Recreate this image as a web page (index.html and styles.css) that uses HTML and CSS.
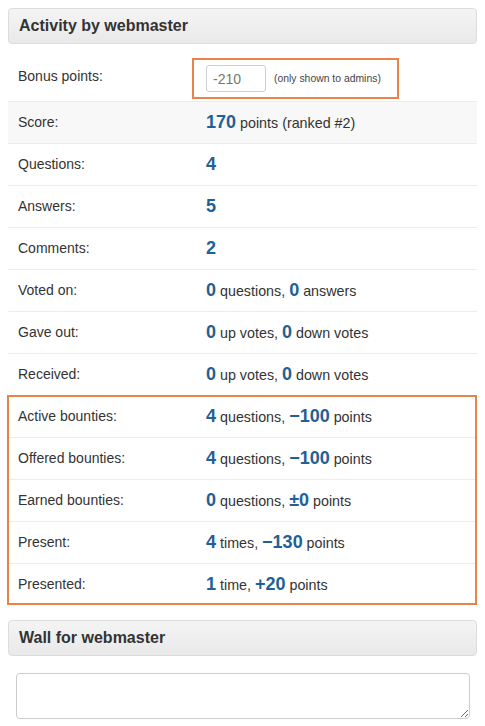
FILE: index.html
```html
<!DOCTYPE html>
<html>
<head>
<meta charset="utf-8">
<link rel="stylesheet" href="styles.css">
</head>
<body>
<div class="page">
  <div class="panel-head"><h2>Activity by webmaster</h2></div>
  <div class="stats">
    <div class="row bonus">
      <div class="label">Bonus points:</div>
      <div class="value">
        <span class="admin-box">
          <input class="bonus-input" type="text" value="-210">
          <span class="note">(only shown to admins)</span>
        </span>
      </div>
    </div>
    <div class="row shaded">
      <div class="label">Score:</div>
      <div class="value"><b>170</b> points (ranked #2)</div>
    </div>
    <div class="row">
      <div class="label">Questions:</div>
      <div class="value"><b>4</b></div>
    </div>
    <div class="row">
      <div class="label">Answers:</div>
      <div class="value"><b>5</b></div>
    </div>
    <div class="row">
      <div class="label">Comments:</div>
      <div class="value"><b>2</b></div>
    </div>
    <div class="row">
      <div class="label">Voted on:</div>
      <div class="value"><b>0</b> questions, <b>0</b> answers</div>
    </div>
    <div class="row">
      <div class="label">Gave out:</div>
      <div class="value"><b>0</b> up votes, <b>0</b> down votes</div>
    </div>
    <div class="row">
      <div class="label">Received:</div>
      <div class="value"><b>0</b> up votes, <b>0</b> down votes</div>
    </div>
    <div class="group">
      <div class="row">
        <div class="label">Active bounties:</div>
        <div class="value"><b>4</b> questions, <b>&minus;100</b> points</div>
      </div>
      <div class="row">
        <div class="label">Offered bounties:</div>
        <div class="value"><b>4</b> questions, <b>&minus;100</b> points</div>
      </div>
      <div class="row">
        <div class="label">Earned bounties:</div>
        <div class="value"><b>0</b> questions, <b>&plusmn;0</b> points</div>
      </div>
      <div class="row">
        <div class="label">Present:</div>
        <div class="value"><b>4</b> times, <b>&minus;130</b> points</div>
      </div>
      <div class="row">
        <div class="label">Presented:</div>
        <div class="value"><b>1</b> time, <b>+20</b> points</div>
      </div>
    </div>
  </div>
  <div class="panel-head wall-head"><h2>Wall for webmaster</h2></div>
  <div class="wall-form">
    <textarea class="wall-text"></textarea>
  </div>
</div>
</body>
</html>
```
FILE: styles.css
```css
html, body {
  margin: 0;
  padding: 0;
  background: #fff;
}
body {
  font-family: "Liberation Sans", Arial, sans-serif;
  font-size: 14px;
  line-height: 20px;
  color: #333;
}
.page {
  padding: 8px;
}
.panel-head {
  height: 36px;
  box-sizing: border-box;
  border: 1px solid #dcdcdc;
  border-radius: 4px;
  background: linear-gradient(to bottom, #f4f4f4, #e9e9e9);
  display: flex;
  align-items: center;
  padding-left: 10px;
}
.panel-head h2 {
  margin: 0;
  font-size: 16px;
  font-weight: bold;
  line-height: 20px;
  color: #333;
}
.stats {
  margin-top: 15px;
}
.row {
  display: grid;
  grid-template-columns: 188px 1fr;
  height: 42px;
  box-sizing: border-box;
  border-top: 1px solid #ececec;
  align-items: start;
}
.row .label,
.row .value {
  padding: 10px 10px 0 10px;
}
.row.bonus {
  border-top: none;
}
.row.bonus .label {
  padding-top: 7px;
}
.row.bonus .value {
  padding-top: 6px;
}
.row.shaded {
  background: #f8f8f8;
}
.value {
  font-size: 14.3px;
}
.value b {
  font-size: 18px;
  font-weight: bold;
  color: #1f6195;
}
.admin-box {
  position: relative;
  display: inline-flex;
  align-items: center;
  gap: 8px;
}
.admin-box::before {
  content: "";
  position: absolute;
  top: -7px;
  bottom: -7px;
  left: -14px;
  right: -18px;
  border: 2px solid #e9834a;
  pointer-events: none;
}
.bonus-input {
  width: 60px;
  height: 27px;
  box-sizing: border-box;
  border: 1px solid #cfcfcf;
  border-radius: 3px;
  padding: 0 6px;
  margin: 0;
  font-family: "Liberation Sans", Arial, sans-serif;
  font-size: 14px;
  color: #777;
  background: #fff;
}
.note {
  font-size: 10.4px;
  line-height: 12px;
  color: #444;
}
.group {
  position: relative;
}
.group::after {
  content: "";
  position: absolute;
  top: 0;
  bottom: 0;
  left: -1px;
  right: 0;
  border: 2px solid #e9834a;
  pointer-events: none;
}
.wall-head {
  margin-top: 15px;
}
.wall-form {
  padding: 17px 7px 0 8px;
}
.wall-text {
  display: block;
  width: 100%;
  height: 46px;
  box-sizing: border-box;
  border: 1px solid #cccccc;
  border-radius: 4px;
  margin: 0;
  font-family: "Liberation Sans", Arial, sans-serif;
  font-size: 14px;
}
```
